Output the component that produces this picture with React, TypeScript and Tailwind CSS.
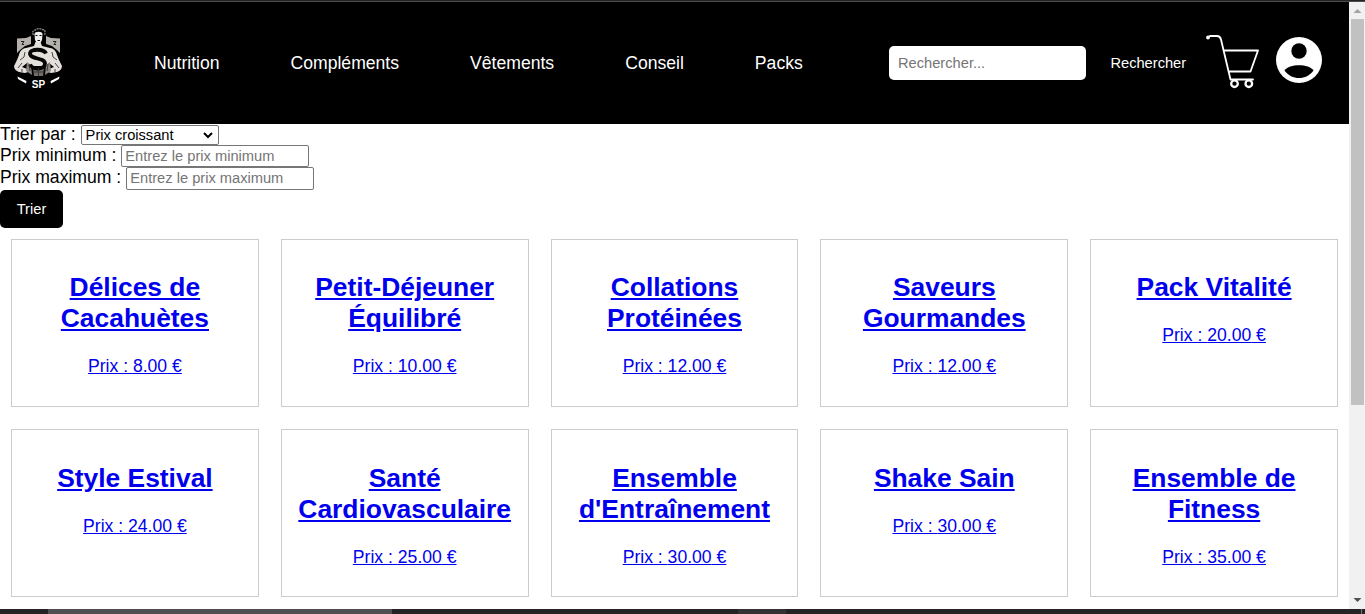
const links = ['Nutrition', 'Compléments', 'Vêtements', 'Conseil', 'Packs'];

const products: [string, string][] = [
  ['Délices de Cacahuètes', '8.00'],
  ['Petit-Déjeuner Équilibré', '10.00'],
  ['Collations Protéinées', '12.00'],
  ['Saveurs Gourmandes', '12.00'],
  ['Pack Vitalité', '20.00'],
  ['Style Estival', '24.00'],
  ['Santé Cardiovasculaire', '25.00'],
  ["Ensemble d'Entraînement", '30.00'],
  ['Shake Sain', '30.00'],
  ['Ensemble de Fitness', '35.00'],
];

function Logo() {
  return (
    <svg viewBox="0 0 80 85" className="h-[85px] w-[80px] shrink-0">
      <path d="M17 23.500l9-.5 5-2v8l-6 2-5 4-3 3zM60 23.500l-9-.5-5-2v8l6 2 5 4 3 3z" fill="#b4b0ab" />
      <path d="M21 26.500h3l-2 3h2M53 26.500h3l-2 3h2" stroke="#222" strokeWidth="1" fill="none" />
      <path d="M34.500 19c0-3 8-3 8 0l-.5 6-2 3.500h-3l-2-3.500z" fill="#eee" />
      <path d="M33.500 20c-2-3 0-5 2-5 2-2 5-1.500 7-.5 3 0 3 3 2 5.500" fill="none" stroke="#8a8a8a" strokeWidth="1.300" strokeDasharray="2 .7" />
      <path d="M35.500 20.500h2M39.500 20.500h2M37.500 25.500h2.500" stroke="#111" strokeWidth="1" fill="none" />
      <path d="M35.500 27l-1.500 4-8 2c-4 .5-6 3-7 7l-2 5-3 6c0 3 2 5 5 6l6 1 3-1-1-3-5-2 5-4 3 3h16l3-3 5 4-5 2-1 3 3 1 6-1c3-1 5-3 5-6l-3-6-2-5c-1-4-3-6.500-7-7l-8-2-1.500-4z" fill="#e3dfda" />
      <path d="M27 47l4 3 1 10-6-4zM50 47l-4 3-1 10 6-4z" fill="#8b8782" />
      <path d="M33 52h11l-1 9h-9z" fill="#716d69" />
      <path d="M46 38.500c-2-5-16-5-16 0 0 6 15 4 15 10 0 6-12 7-15 1" fill="none" stroke="#050505" strokeWidth="3.800" />
      <path d="M20 45l4-3 1-5M57 45l-4-3-1-5M18 53l4-5M59 53l-4-5M22 57v-3M55 57v-3M29 49l1 7M48 49l-1 7M38.500 53v8M34 57h9" fill="none" stroke="#333" strokeWidth=".9" />
      <path d="M17.500 61.500l9 4.500-.5 2.500-8-4.500zM59.500 61.500l-9 4.500.5 2.500 8-4.500z" fill="#fff" />
      <text x="38.500" y="72.500" textAnchor="middle" fill="#fff" fontFamily="Liberation Sans, sans-serif" fontWeight="700" fontSize="10">SP</text>
    </svg>
  );
}

function Cart() {
  return (
    <svg viewBox="0 0 56 56" className="h-[56px] w-[56px]" fill="none" stroke="#fff" strokeWidth="1.8" strokeLinejoin="round" strokeLinecap="round">
      <path d="M3 4.500L5 3H12C14.500 3 15.500 4.500 16 6.500L25.500 46.500H48M19 17.500H53L45.500 38.500H24" />
      <circle cx="3" cy="4.500" r="1" />
      <circle cx="29.500" cy="50.700" r="3.300" strokeWidth="2.300" />
      <circle cx="43.800" cy="50.700" r="3.300" strokeWidth="2.300" />
    </svg>
  );
}

function User() {
  return (
    <svg viewBox="0 0 46 46" className="h-[46px] w-[46px]">
      <circle cx="23" cy="23" r="23" fill="#fff" />
      <circle cx="23" cy="14" r="7.700" fill="#000" />
      <path d="M8.500 33.500C13 26.500 33 26.500 37.500 33.500C30.500 43.500 15.500 43.500 8.500 33.500Z" fill="#000" />
    </svg>
  );
}

const field =
  'block w-[188px] rounded-[2px] border border-[#767676] bg-white px-[3px] text-[14.667px] placeholder:text-[#757575] outline-none';

export default function App() {
  return (
    <div className="flex h-[614px] w-[1365px] flex-col overflow-hidden bg-white font-['Liberation_Sans',Arial,sans-serif] text-[17.6px] leading-5 text-black">
      <div className="h-[2px] shrink-0 border-b border-[#4a4a4a] bg-[#242424]" />
      <div className="flex h-[607px] shrink-0">
        <main className="w-[1349px] overflow-hidden">
          <header className="flex h-[122px] items-start bg-black text-white">
            <div className="mt-[13px] w-[154px] shrink-0">
              <Logo />
            </div>
            <nav className="mt-[51px] flex w-[735px] shrink-0 gap-[71px]">
              {links.map((l) => (
                <a key={l}>{l}</a>
              ))}
            </nav>
            <input
              placeholder="Rechercher..."
              className="mt-[44px] block h-[34px] w-[197px] shrink-0 rounded-[5px] bg-white px-[9px] text-[14.667px] text-black outline-none placeholder:text-[#757575]"
            />
            <button className="mt-[51px] ml-[24.4px] w-[77px] shrink-0 text-left text-[14.667px]">Rechercher</button>
            <a className="mt-[31px] ml-[17.6px] shrink-0 pr-[15px]">
              <Cart />
            </a>
            <a className="mt-[35.4px] shrink-0">
              <User />
            </a>
          </header>
          <form>
            <div className="flex h-[21px] gap-[5px]">
              <label>Trier par :</label>
              <div className="mt-px flex h-5 w-[138px] items-center justify-between rounded-[2px] border border-[#767676] pr-[4px] pl-[4px] text-[14.667px]">
                <span>Prix croissant</span>
                <svg viewBox="0 0 12 8" className="h-[8px] w-[12px]">
                  <path d="M2 2l4 4 4-4" fill="none" stroke="#000" strokeWidth="2" />
                </svg>
              </div>
            </div>
            <div className="flex h-[22px] gap-[5px]">
              <label>Prix minimum :</label>
              <input className={`${field} h-[22px]`} placeholder="Entrez le prix minimum" />
            </div>
            <div className="flex h-[23px] gap-[5px]">
              <label>Prix maximum :</label>
              <input className={`${field} h-[23px] pb-[1px]`} placeholder="Entrez le prix maximum" />
            </div>
            <button className="block h-[38px] w-[63px] rounded-[5px] bg-black text-[14.667px] text-white">Trier</button>
          </form>
          <section className="grid grid-cols-5">
            {products.map(([name, price]) => (
              <a key={name} className="m-[11px] block h-[168.2px] border border-[#ccc] px-[11px] pt-[32.4px] text-center text-[#0000ee] underline">
                <h2 className="text-[26.4px] leading-[31px] font-bold">{name}</h2>
                <p className="mt-[22px]">Prix : {price} €</p>
              </a>
            ))}
          </section>
        </main>
        <aside className="flex w-4 flex-col items-center justify-between bg-[#f1f1f1]">
          <div className="flex w-full flex-col items-center">
            <svg viewBox="0 0 16 17" className="h-[17px] w-4">
              <path d="M4.500 11h8l-4-4z" fill="#a3a3a3" />
            </svg>
            <div className="ml-[1px] h-[386px] w-[13px] bg-[#c1c1c1]" />
          </div>
          <svg viewBox="0 0 16 17" className="h-[17px] w-4">
            <path d="M4.500 6h8l-4 4z" fill="#505050" />
          </svg>
        </aside>
      </div>
      <footer className="flex h-[5px] shrink-0 bg-[#242424]">
        <div className="ml-[48px] w-[344px] bg-[#505050]" />
        <div className="ml-[346px] w-[48px] bg-[#333]" />
        <div className="ml-auto w-[4px] border-l border-[#777]" />
      </footer>
    </div>
  );
}
